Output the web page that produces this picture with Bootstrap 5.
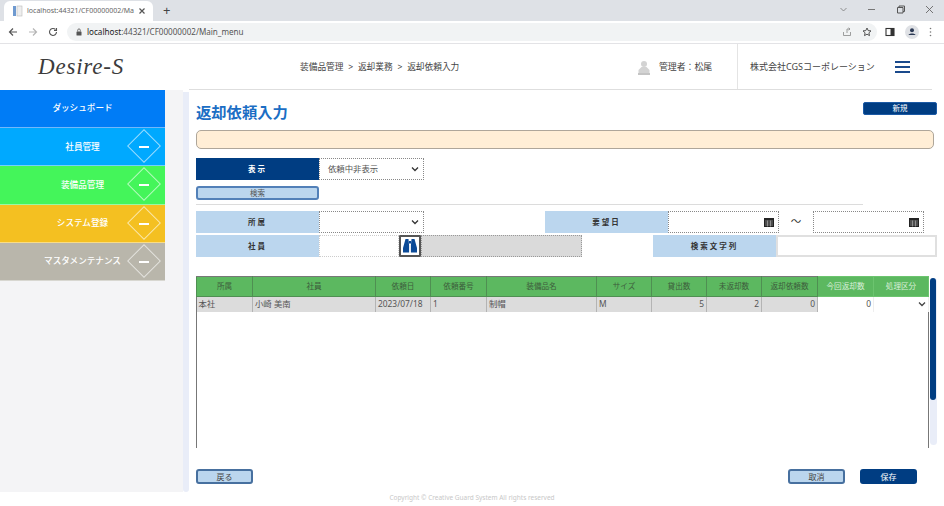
<!DOCTYPE html>
<html lang="ja">
<head>
<meta charset="utf-8">
<title>返却依頼入力</title>
<link href="https://cdn.jsdelivr.net/npm/bootstrap@5.3.0/dist/css/bootstrap.min.css" rel="stylesheet">
<style>
html,body{height:506px;overflow:hidden;background:#fff}
body{width:944px;font-family:"Noto Sans","Noto Sans CJK JP",sans-serif;font-size:9px;color:#444;line-height:1.2}
svg{display:block;flex:none}
.tabbar{height:21px;background:#dee1e6;padding:1px 0 0 4px}
.tabitem{width:149px;height:20px;background:#fff;border-radius:6px 6px 0 0;padding:0 7px 0 8px;font-size:7px;color:#666}
.tabtext{white-space:nowrap;margin-left:3px}
.plus{margin-left:10px;font-size:13px;color:#444;margin-top:-1px}
.winctl{margin-left:auto;padding:0 10px 0 0;gap:19px;align-self:flex-start;margin-top:4px}
.toolbar{height:23px;border-bottom:1px solid #e3e3e6;padding:0 0 1px 8px}
.toolbar .g10{margin-left:10px}
.omni{width:810px;height:18px;margin-left:9px;background:#f1f3f4;border-radius:9px;padding:0 5px 0 9px;color:#555;font-size:8.1px}
.omni .urlt{margin-left:5px}
.omni .urlm{color:#222}
.sitehead{height:46px;padding-left:38px}
.logo{width:262px;font-family:"Liberation Serif",serif;font-style:italic;font-size:23px;color:#3c3c3c;letter-spacing:.8px}
.crumb{width:338px;font-size:8.700px;color:#444;word-spacing:2.500px}
.usr{width:99px;font-size:8.900px;gap:9px}
.coname{width:207px;height:46px;border-left:1px solid #e4e4e4;padding-left:12px;font-size:9px;white-space:nowrap}
.burger{width:15px;height:12px;margin-right:34px;flex-direction:column;justify-content:space-between}
.burger i{display:block;height:2px;background:#1a4a8c}
.bodyrow{height:402px}
.leftcol{width:165px;background:#f4f4f6}
.sidenav{width:165px;flex:none}
.navi{height:38.200px;color:#fff;font-weight:500;font-size:8.600px;position:relative;border-bottom:1px solid rgba(255,255,255,.45);justify-content:center}
.n1{background:#007cf6}.n2{background:#00a9ff}.n3{background:#44f55a}.n4{background:#f4c021}.n5{background:#b9b6ab}
.dia{width:24px;height:24px;border:1px solid rgba(255,255,255,.6);transform:rotate(45deg);position:absolute;left:132px;top:6px}
.dash{width:10px;height:2px;background:#fff;position:absolute;left:139px;top:18px}
.gutter{width:18px;background:#f4f4f6}
.strip{width:6px;background:#e9edf8;border-radius:0 0 4px 4px;margin-top:2px}
.mainp{width:755px;height:402px}
.hline{width:743px;height:1px;margin-top:-1px;background:#dedede}
.inner{padding:0 7px 0 7px}
.pagehead{height:40px}
.ttl{font-size:15.300px;font-weight:700;color:#1b6ec4;margin:0;padding-top:13px;line-height:18px}
.newb{width:74px;height:13px;margin-top:12px;padding:0;font-size:7.500px;line-height:11px;border-radius:2px;background:#003d82;border:1px solid #1c5aa5;color:#fff}
.notice{width:738px;height:19px;background:#ffeed6;border:1px solid #aea69a;border-radius:5px;margin-bottom:9px}
.frow{height:22px}
.frow2{margin-top:2px}
.lab{width:123px;height:22px;background:#bbd6ee;font-size:7.500px;font-weight:700;color:#333;letter-spacing:2px}
.lab.dark{background:#003d82;color:#fff}
.fld{height:22px;background:#fff;border:1px dotted #888;font-size:8.400px;padding:0 4px 0 8px;color:#555}
.sel{width:105px}
.chev{margin-left:auto}
.searchb{width:123px;height:14px;padding:0;margin-top:6px;font-size:7.500px;line-height:10px;background:#bbd6ee;border:2px solid #5280b8;border-radius:3px;color:#555}
.rule{width:667px;height:1px;background:#dcdcdc;margin:4px 0 6px}
.sp121{width:121px}
.dt{width:111px;justify-content:flex-end;padding-right:4px}
.tilde{width:34px;text-align:center;font-size:10.500px;color:#333;line-height:20px}
.txtf{width:80px;border-color:#ccc}
.binb{width:22px;height:22px;padding:0;background:#fff;border:2px solid #555;border-radius:1px;justify-content:center}
.grayf{width:161px;background:#dadada;border-color:#999}
.sp71{width:71px}
.srchf{width:161px;height:22px;border:2px solid #e0e0e0;background:#fff}
.gridw{width:741px;height:172px;margin-top:19px;position:relative}
.gridb{width:733px;height:172px;border-left:1px solid #777;border-right:1px solid #777}
table.tbl{table-layout:fixed;width:732px;margin:0 0 0 -1px;font-size:8.400px;border-collapse:collapse;color:#555}
.tbl th{height:20px;padding:0;background:#5cb860;text-align:center;font-weight:400;font-size:7.600px;color:#3c5c3c;border:1px solid #4f8f52;border-top:1px solid #777;vertical-align:middle}
.tbl th.lite{color:#d9efd9;border-color:#6cc46f}
.tbl td{height:15px;padding:0 2px;background:#dcdcdc;border-right:1px solid #b4b4b4;border-bottom:0;vertical-align:middle;white-space:nowrap}
.tbl td.rt{text-align:right}
.tbl td.wh{background:#fff;border-right:1px solid #eee}
.sbar{position:absolute;left:734px;top:2px;width:7px;height:167px;background:#e9edf8;border-radius:4px}
.thumb{width:6px;height:122px;background:#003d82;border-radius:3px}
.foot{height:15px;margin-top:21px;padding-right:20px}
.bbtn{width:57px;height:15px;padding:0;font-size:8px;line-height:11px;border-radius:3px;background:#bbd6ee;border:2px solid #47709f;color:#444}
.bbtn.pri{background:#003d82;border-color:#003d82;color:#fff;margin-left:15px}
.copyr{width:944px;text-align:center;font-size:6.500px;color:#c8c8c8;height:14px;line-height:11px}
</style>
</head>
<body>
<div class="tabbar d-flex align-items-center">
  <div class="tabitem d-flex align-items-center">
    <svg width="12" height="12" viewBox="0 0 12 12"><rect x="1" y="1" width="3" height="10" fill="#6f9ad0"/><rect x="5" y="1" width="5" height="10" fill="#eee" stroke="#bbb" stroke-width=".6"/></svg>
    <div class="tabtext">localhost:44321/CF00000002/Ma</div>
    <svg class="ms-auto" width="8" height="8" viewBox="0 0 8 8"><path d="M1.500 1.500l5 5M6.500 1.500l-5 5" stroke="#555" stroke-width="1.200"/></svg>
  </div>
  <div class="plus">+</div>
  <div class="winctl d-flex align-items-center">
    <svg width="9" height="9" viewBox="0 0 9 9"><path d="M1.500 3l3 3 3-3" fill="none" stroke="#777" stroke-width=".8"/></svg>
    <svg width="10" height="9" viewBox="0 0 10 9"><path d="M1 4.500h7" stroke="#777" stroke-width="1"/></svg>
    <svg width="10" height="9" viewBox="0 0 10 9"><path d="M1.500 2.500h5.500v5.500h-5.500zM3 2.500v-1.500h5.500v5.500h-1.500" fill="none" stroke="#555" stroke-width="1"/></svg>
    <svg width="9" height="9" viewBox="0 0 9 9"><path d="M1 1l7 7M8 1l-7 7" stroke="#666" stroke-width=".9"/></svg>
  </div>
</div>
<div class="toolbar d-flex align-items-center">
  <svg width="10" height="10" viewBox="0 0 10 10"><path d="M9 5H1.500M5 1.500L1.500 5 5 8.500" fill="none" stroke="#555" stroke-width="1.200"/></svg>
  <svg class="g10" width="10" height="10" viewBox="0 0 10 10"><path d="M1 5h7.500M5 1.500L8.500 5 5 8.500" fill="none" stroke="#b5b5b5" stroke-width="1.200"/></svg>
  <svg class="g10" width="10" height="10" viewBox="0 0 10 10"><path d="M8.500 5a3.500 3.500 0 1 1-1-2.500M8.500 1v2.500H6" fill="none" stroke="#555" stroke-width="1.100"/></svg>
  <div class="omni d-flex align-items-center">
    <svg width="6" height="8" viewBox="0 0 6 8"><rect x=".5" y="3.500" width="5" height="4" rx=".6" fill="#555"/><path d="M1.700 3.500V2.200a1.300 1.300 0 0 1 2.600 0v1.300" fill="none" stroke="#555" stroke-width=".8"/></svg>
    <span class="urlt"><span class="urlm">localhost</span>:44321/CF00000002/Main_menu</span>
    <svg class="ms-auto" width="10" height="10" viewBox="0 0 10 10"><path d="M1.500 5v3.500h7V5M5 6V2M5 2h3M8 2L6.500 .8M8 2L6.500 3.200" fill="none" stroke="#888" stroke-width=".8"/></svg>
    <svg class="g10" width="10" height="10" viewBox="0 0 10 10"><path d="M5 1l1.200 2.600 2.800.3-2.100 1.900.6 2.800L5 7.200 2.500 8.600l.6-2.800L1 3.900l2.800-.3z" fill="none" stroke="#444" stroke-width=".9"/></svg>
  </div>
  <svg class="ms-2" width="10" height="10" viewBox="0 0 10 10"><rect x="1" y="1.500" width="8" height="7" fill="none" stroke="#333" stroke-width="1.100"/><rect x="5.500" y="1.500" width="3.500" height="7" fill="#333"/></svg>
  <svg class="g10" width="14" height="14" viewBox="0 0 14 14"><circle cx="7" cy="7" r="7" fill="#dfe1e5"/><circle cx="7" cy="5.300" r="2" fill="#2d3a55"/><path d="M3.500 10c.6-2 6.400-2 7 0z" fill="#2d3a55"/></svg>
  <svg class="g10" width="3" height="10" viewBox="0 0 3 10"><circle cx="1.500" cy="1.500" r=".8" fill="#777"/><circle cx="1.500" cy="5" r=".8" fill="#777"/><circle cx="1.500" cy="8.500" r=".8" fill="#777"/></svg>
</div>
<header class="sitehead d-flex align-items-center">
  <div class="logo">Desire-S</div>
  <div class="crumb">装備品管理 &gt; 返却業務 &gt; 返却依頼入力</div>
  <div class="usr d-flex align-items-center">
    <svg width="12" height="15" viewBox="0 0 12 15"><circle cx="6" cy="4" r="3" fill="#d3d3d3"/><path d="M3.500 7h5l3 3v4H.5v-4z" fill="#d3d3d3"/><path d="M0 13h12v2H0z" fill="#c4c4c4"/></svg>
    <span>管理者：松尾</span>
  </div>
  <div class="coname d-flex align-items-center">
    <span>株式会社CGSコーポレーション</span>
    <div class="burger d-flex ms-auto"><i></i><i></i><i></i></div>
  </div>
</header>
<div class="bodyrow d-flex">
  <div class="leftcol d-flex flex-column">
    <nav class="sidenav">
      <div class="navi n1 d-flex align-items-center"><span>ダッシュボード</span></div>
      <div class="navi n2 d-flex align-items-center"><span>社員管理</span><div class="dia"></div><div class="dash"></div></div>
      <div class="navi n3 d-flex align-items-center"><span>装備品管理</span><div class="dia"></div><div class="dash"></div></div>
      <div class="navi n4 d-flex align-items-center"><span>システム登録</span><div class="dia"></div><div class="dash"></div></div>
      <div class="navi n5 d-flex align-items-center"><span>マスタメンテナンス</span><div class="dia"></div><div class="dash"></div></div>
    </nav>
  </div>
  <div class="gutter"></div>
  <div class="strip"></div>
  <main class="mainp">
    <div class="hline"></div>
    <div class="inner">
      <div class="pagehead d-flex justify-content-between">
        <h1 class="ttl">返却依頼入力</h1>
        <button class="btn newb" type="button">新規</button>
      </div>
      <div class="notice"></div>
      <div class="frow d-flex">
        <div class="lab dark d-flex align-items-center justify-content-center">表示</div>
        <div class="fld sel d-flex align-items-center">依頼中非表示<svg class="chev" width="8" height="6" viewBox="0 0 8 6"><path d="M1 1.500l3 3 3-3" fill="none" stroke="#333" stroke-width="1.300"/></svg></div>
      </div>
      <button class="btn searchb d-block" type="button">検索</button>
      <div class="rule"></div>
      <div class="frow d-flex">
        <div class="lab d-flex align-items-center justify-content-center">所属</div>
        <div class="fld sel d-flex align-items-center"><svg class="chev" width="8" height="6" viewBox="0 0 8 6"><path d="M1 1.500l3 3 3-3" fill="none" stroke="#333" stroke-width="1.300"/></svg></div>
        <div class="sp121"></div>
        <div class="lab d-flex align-items-center justify-content-center">要望日</div>
        <div class="fld dt d-flex align-items-center"><svg width="10" height="10" viewBox="0 0 10 10"><path d="M0 1h10v9H0z" fill="#222"/><path d="M1 4h8M1 6h8M1 8h8M3.500 3.500v6M6.500 3.500v6" stroke="#bbb" stroke-width=".6"/></svg></div>
        <div class="tilde">〜</div>
        <div class="fld dt d-flex align-items-center"><svg width="10" height="10" viewBox="0 0 10 10"><path d="M0 1h10v9H0z" fill="#222"/><path d="M1 4h8M1 6h8M1 8h8M3.500 3.500v6M6.500 3.500v6" stroke="#bbb" stroke-width=".6"/></svg></div>
      </div>
      <div class="frow frow2 d-flex">
        <div class="lab d-flex align-items-center justify-content-center">社員</div>
        <div class="fld txtf"></div>
        <button class="btn binb d-flex align-items-center" type="button"><svg width="16" height="16" viewBox="0 0 16 16"><path d="M3.500 1h3l.6 6.500V14.500H1V10zM9.500 1h3l2.500 9v4.500H8.900V7.500z" fill="#0b4a97"/><path d="M7 3h2v2.500H7z" fill="#0b4a97"/></svg></button>
        <div class="fld grayf"></div>
        <div class="sp71"></div>
        <div class="lab d-flex align-items-center justify-content-center">検索文字列</div>
        <div class="srchf"></div>
      </div>
      <div class="gridw">
        <div class="gridb">
          <table class="table tbl">
            <colgroup><col style="width:56px"><col style="width:123px"><col style="width:55px"><col style="width:56px"><col style="width:110px"><col style="width:55px"><col style="width:55px"><col style="width:55px"><col style="width:56px"><col style="width:56px"><col style="width:55px"></colgroup>
            <thead><tr><th>所属</th><th>社員</th><th>依頼日</th><th>依頼番号</th><th>装備品名</th><th>サイズ</th><th>貸出数</th><th>未返却数</th><th>返却依頼数</th><th class="lite">今回返却数</th><th class="lite">処理区分</th></tr></thead>
            <tbody><tr><td>本社</td><td>小崎 美南</td><td>2023/07/18</td><td>1</td><td>制帽</td><td>M</td><td class="rt">5</td><td class="rt">2</td><td class="rt">0</td><td class="rt wh">0</td><td class="wh"><svg class="ms-auto" width="8" height="6" viewBox="0 0 8 6"><path d="M1 1.500l3 3 3-3" fill="none" stroke="#444" stroke-width="1.300"/></svg></td></tr></tbody>
          </table>
        </div>
        <div class="sbar"><div class="thumb"></div></div>
      </div>
      <div class="foot d-flex">
        <button class="btn bbtn" type="button">戻る</button>
        <button class="btn bbtn ms-auto" type="button">取消</button>
        <button class="btn bbtn pri" type="button">保存</button>
      </div>
    </div>
  </main>
</div>
<div class="copyr">Copyright © Creative Guard System All rights reserved</div>
<script src="https://cdn.jsdelivr.net/npm/bootstrap@5.3.0/dist/js/bootstrap.bundle.min.js"></script>
</body>
</html>
